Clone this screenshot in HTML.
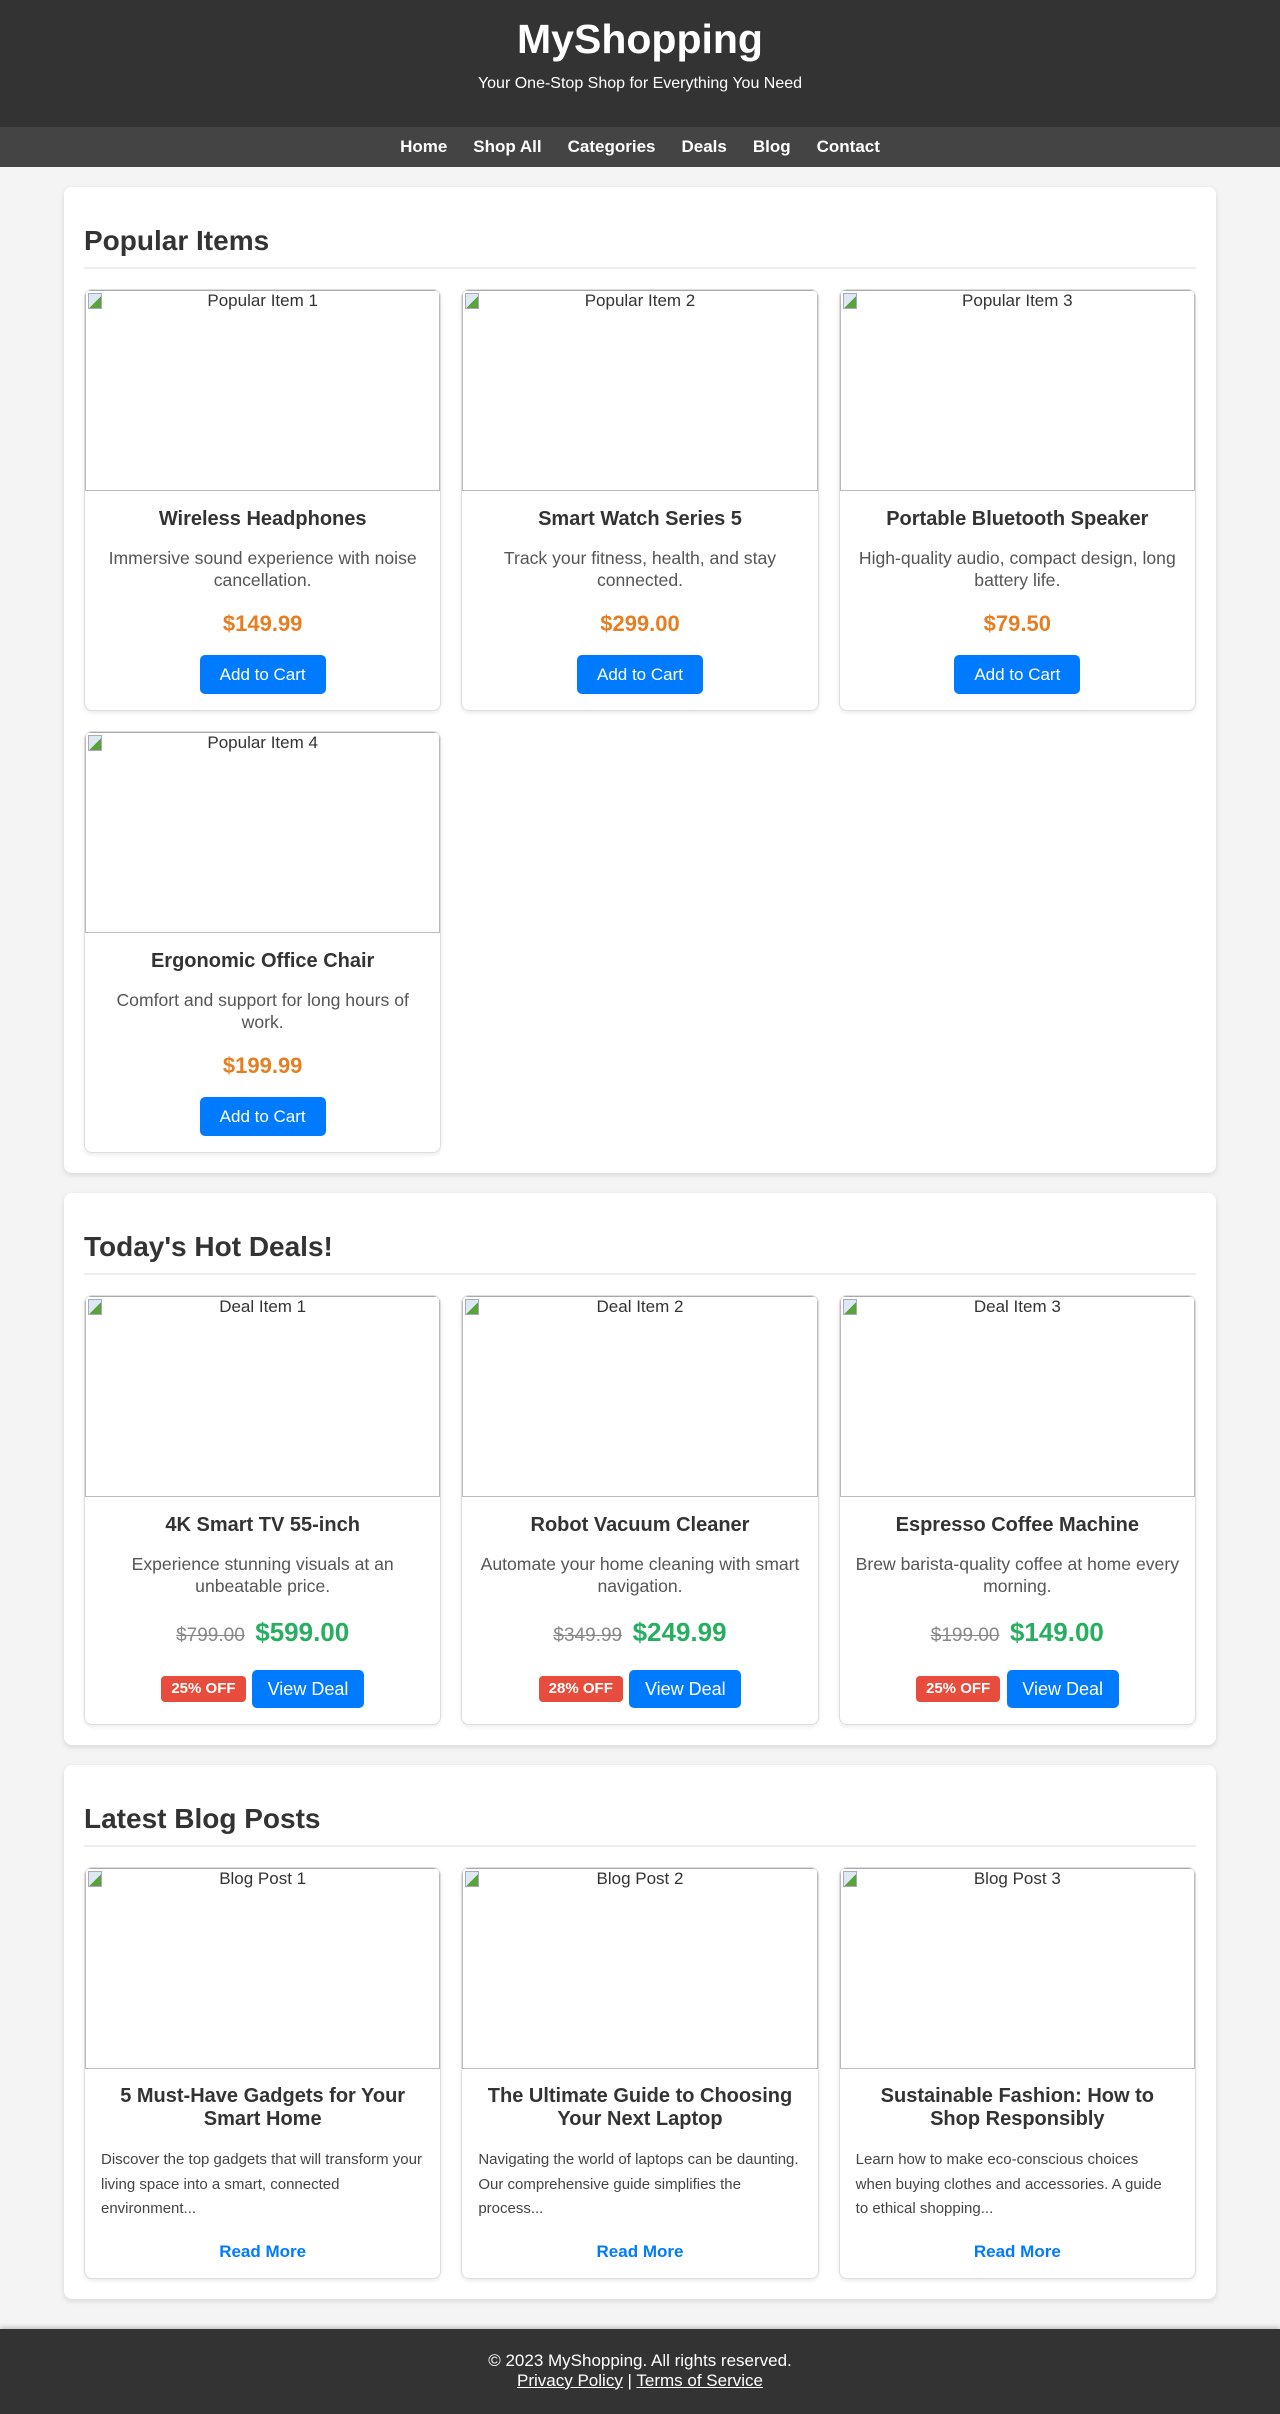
<!DOCTYPE html>
<html><head><meta charset="utf-8"><style>
*{box-sizing:border-box}
body{margin:0;background:#f4f4f4;font-family:"Liberation Sans",Arial,sans-serif;color:#333}
header{background:#333;color:#fff;text-align:center;height:127px;padding-top:15px}
header h1{margin:0;font-size:41px;line-height:48px;font-weight:bold}
header p{margin:12px 0 0;font-size:16px;line-height:18px}
nav{background:#444;height:40px;text-align:center;line-height:40px}
nav a{color:#fff;font-weight:bold;font-size:17px;text-decoration:none;margin:0 13px}
.sec{width:1152px;margin:20px 0 0 64px;background:#fff;border-radius:8px;padding:20px;box-shadow:0 2px 6px rgba(0,0,0,.12)}
h2{margin:18px 0 20px;font-size:28px;line-height:32px;padding-bottom:10px;border-bottom:2px solid #eee}
.grid{display:grid;grid-template-columns:repeat(3,1fr);gap:20px}
.card{border:1px solid #ddd;border-radius:8px;overflow:hidden;text-align:center;box-shadow:0 2px 4px rgba(0,0,0,.08)}
.img{height:201px;border:1px solid #bbb;border-top-color:#aaa;position:relative;font-size:17px;line-height:20px}
.img i{position:absolute;left:2px;top:2px;width:14px;height:16px;background:linear-gradient(135deg,#dde8f5 55%,#5aa33c 55%);border:1px solid #aab}
.body{padding:16px 15px 16px}
h3{margin:0;font-size:20px;line-height:24px}
.d{margin:17px 0 0;font-size:17.6px;line-height:21.5px;color:#555}
.pr{margin-top:20px;font-size:22px;line-height:26px;font-weight:bold;color:#e67e22}
.btn{display:inline-block;background:#007bff;color:#fff;border-radius:5px;font-size:17px;height:39px;line-height:39px;padding:0 20px;margin-top:18px}
.dp{margin-top:20px;line-height:30px}
.old{color:#888;text-decoration:line-through;font-size:19px;margin-right:6px}
.new{color:#27ae60;font-size:26px;font-weight:bold}
.bd{display:inline-block;background:#e74c3c;color:#fff;font-weight:bold;font-size:15px;border-radius:4px;height:26px;line-height:26px;padding:0 10px;vertical-align:middle}
.vd{display:inline-block;background:#007bff;color:#fff;border-radius:5px;font-size:18px;height:38px;line-height:38px;width:112px;vertical-align:middle;margin-left:2px}
.act{margin-top:18px}
.blog h3{line-height:23px}
.ex{text-align:left;font-size:15px;line-height:24.5px;color:#444;margin:17px 0 0;padding:0 0 0 1px;white-space:nowrap}
.rm{display:block;color:#007bff;font-weight:bold;font-size:17px;margin-top:20px;line-height:20px}
footer{background:#333;color:#fff;text-align:center;margin-top:30px;height:85px;padding-top:22px;font-size:17px;line-height:20px;box-shadow:0 -2px 4px rgba(0,0,0,.2)}
footer a{color:#fff}
</style></head><body>
<header><h1>MyShopping</h1><p>Your One-Stop Shop for Everything You Need</p></header>
<nav><a>Home</a><a>Shop All</a><a>Categories</a><a>Deals</a><a>Blog</a><a>Contact</a></nav>

<div class="sec"><h2>Popular Items</h2><div class="grid">
<div class="card"><div class="img"><i></i>Popular Item 1</div><div class="body"><h3>Wireless Headphones</h3><p class="d">Immersive sound experience with noise cancellation.</p><div class="pr">$149.99</div><span class="btn">Add to Cart</span></div></div>
<div class="card"><div class="img"><i></i>Popular Item 2</div><div class="body"><h3>Smart Watch Series 5</h3><p class="d">Track your fitness, health, and stay connected.</p><div class="pr">$299.00</div><span class="btn">Add to Cart</span></div></div>
<div class="card"><div class="img"><i></i>Popular Item 3</div><div class="body"><h3>Portable Bluetooth Speaker</h3><p class="d">High-quality audio, compact design, long battery life.</p><div class="pr">$79.50</div><span class="btn">Add to Cart</span></div></div>
<div class="card"><div class="img"><i></i>Popular Item 4</div><div class="body"><h3>Ergonomic Office Chair</h3><p class="d">Comfort and support for long hours of work.</p><div class="pr">$199.99</div><span class="btn">Add to Cart</span></div></div>
</div></div>

<div class="sec"><h2>Today's Hot Deals!</h2><div class="grid">
<div class="card"><div class="img"><i></i>Deal Item 1</div><div class="body"><h3>4K Smart TV 55-inch</h3><p class="d">Experience stunning visuals at an unbeatable price.</p><div class="dp"><span class="old">$799.00</span> <span class="new">$599.00</span></div><div class="act"><span class="bd">25% OFF</span> <span class="vd">View Deal</span></div></div></div>
<div class="card"><div class="img"><i></i>Deal Item 2</div><div class="body"><h3>Robot Vacuum Cleaner</h3><p class="d">Automate your home cleaning with smart navigation.</p><div class="dp"><span class="old">$349.99</span> <span class="new">$249.99</span></div><div class="act"><span class="bd">28% OFF</span> <span class="vd">View Deal</span></div></div></div>
<div class="card"><div class="img"><i></i>Deal Item 3</div><div class="body"><h3>Espresso Coffee Machine</h3><p class="d">Brew barista-quality coffee at home every morning.</p><div class="dp"><span class="old">$199.00</span> <span class="new">$149.00</span></div><div class="act"><span class="bd">25% OFF</span> <span class="vd">View Deal</span></div></div></div>
</div></div>

<div class="sec"><h2>Latest Blog Posts</h2><div class="grid blog">
<div class="card"><div class="img"><i></i>Blog Post 1</div><div class="body"><h3>5 Must-Have Gadgets for Your Smart Home</h3><p class="ex">Discover the top gadgets that will transform your<br>living space into a smart, connected<br>environment...</p><a class="rm">Read More</a></div></div>
<div class="card"><div class="img"><i></i>Blog Post 2</div><div class="body"><h3>The Ultimate Guide to Choosing Your Next Laptop</h3><p class="ex">Navigating the world of laptops can be daunting.<br>Our comprehensive guide simplifies the<br>process...</p><a class="rm">Read More</a></div></div>
<div class="card"><div class="img"><i></i>Blog Post 3</div><div class="body"><h3>Sustainable Fashion: How to Shop Responsibly</h3><p class="ex">Learn how to make eco-conscious choices<br>when buying clothes and accessories. A guide<br>to ethical shopping...</p><a class="rm">Read More</a></div></div>
</div></div>

<footer>© 2023 MyShopping. All rights reserved.<br><a href="#">Privacy Policy</a> | <a href="#">Terms of Service</a></footer>
</body></html>
